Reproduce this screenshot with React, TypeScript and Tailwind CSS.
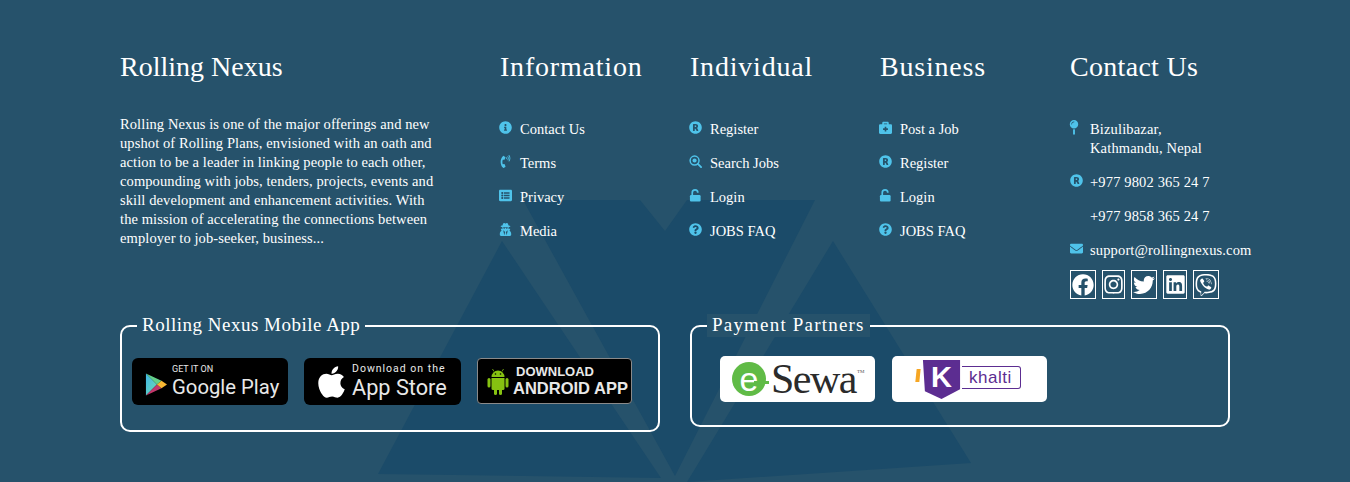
import React from 'react';
import {
  FaInfoCircle, FaPhoneVolume, FaListAlt, FaUserSecret, FaRegistered,
  FaQuestionCircle, FaBriefcaseMedical, FaMapPin, FaEnvelope, FaFacebook, FaInstagram,
  FaTwitter, FaLinkedin, FaViber, FaApple,
} from 'react-icons/fa';

const SearchR = ({ className }: { className?: string }) => (
  <svg viewBox="0 0 14 14" className={className}>
    <circle cx="6" cy="6" r="4.8" fill="none" stroke="currentColor" strokeWidth="1.6" />
    <circle cx="6" cy="6" r="2.2" fill="currentColor" />
    <path d="M9.5 9.5 L13 13" stroke="currentColor" strokeWidth="2" strokeLinecap="round" />
  </svg>
);

const Unlock = ({ className }: { className?: string }) => (
  <svg viewBox="0 0 14 14" className={className}>
    <path d="M3.5 7 V4 A3 3 0 0 1 9.5 4" fill="none" stroke="currentColor" strokeWidth="1.8" />
    <rect x="1" y="6.5" width="11.5" height="7" rx="1.2" fill="currentColor" />
  </svg>
);

const AndroidBot = () => (
  <svg viewBox="0 0 22 27" className="mr-[4px] h-[27px] w-[22px] shrink-0" fill="#86c211">
    <path d="M4.5 9 A6.5 6.5 0 0 1 17.5 9 Z" />
    <path d="M7 3.5 L5.5 1 M15 3.5 L16.5 1" stroke="#86c211" strokeWidth="0.8" />
    <circle cx="8.5" cy="6" r="0.8" fill="#000" />
    <circle cx="13.5" cy="6" r="0.8" fill="#000" />
    <path d="M4.5 10 H17.5 V20.5 A1.5 1.5 0 0 1 16 22 H6 A1.5 1.5 0 0 1 4.5 20.5 Z" />
    <rect x="0.5" y="10" width="3" height="9.5" rx="1.5" />
    <rect x="18.5" y="10" width="3" height="9.5" rx="1.5" />
    <rect x="7" y="20" width="3" height="7" rx="1.5" />
    <rect x="12" y="20" width="3" height="7" rx="1.5" />
  </svg>
);

const info = [
  { icon: FaInfoCircle, label: 'Contact Us' },
  { icon: FaPhoneVolume, label: 'Terms' },
  { icon: FaListAlt, label: 'Privacy' },
  { icon: FaUserSecret, label: 'Media' },
];
const individual = [
  { icon: FaRegistered, label: 'Register' },
  { icon: SearchR, label: 'Search Jobs' },
  { icon: Unlock, label: 'Login' },
  { icon: FaQuestionCircle, label: 'JOBS FAQ' },
];
const business = [
  { icon: FaBriefcaseMedical, label: 'Post a Job' },
  { icon: FaRegistered, label: 'Register' },
  { icon: Unlock, label: 'Login' },
  { icon: FaQuestionCircle, label: 'JOBS FAQ' },
];

const LinkColumn = ({ title, items }: { title: string; items: typeof info }) => (
  <div className="w-[190px] shrink-0">
    <h4 className="text-[28px] leading-[34px] text-white tracking-[0.8px]">{title}</h4>
    <ul className="mt-[35px] flex flex-col gap-[14px]">
      {items.map((item) => (
        <li key={item.label} className="flex h-[20px] items-center text-[14.5px] leading-[20px] text-white">
          <item.icon className="mb-[3px] mr-[7px] h-[13px] w-[13px] -translate-x-px text-[#4fc3ea]" />
          <span>{item.label}</span>
        </li>
      ))}
    </ul>
  </div>
);

const Box = ({ title, className, legendClass, children }: { title: string; className: string; legendClass: string; children: React.ReactNode }) => (
  <fieldset className={`rounded-[10px] border-2 border-white ${className}`}>
    <legend className={`ml-[15px] bg-[#26526b] px-[5px] pb-[2px] text-[19px] leading-[21px] text-white ${legendClass}`}>{title}</legend>
    {children}
  </fieldset>
);

export default function App() {
  return (
    <footer className="relative h-[482px] w-full overflow-hidden bg-[#26526b] font-['Liberation_Serif',serif]">
      <svg className="absolute inset-0 h-full w-full" viewBox="0 0 1350 482" preserveAspectRatio="none">
        <g fill="#1b4b69">
          <polygon points="502,241 378,474 661,478" />
          <polygon points="523,200 640,200 665,231 687,200 815,200 675,476" />
          <polygon points="833,241 971,463 687,482" />
        </g>
      </svg>

      <div className="relative mx-auto w-[1110px] pt-[50px]">
        <div className="flex">
          <div className="w-[380px] shrink-0">
            <h4 className="text-[28px] leading-[34px] text-white">Rolling Nexus</h4>
            <p className="mt-[31px] w-[320px] text-[14.5px] leading-[19px] tracking-[0.1px] text-white">
              Rolling Nexus is one of the major offerings and new upshot of Rolling Plans, envisioned with an oath and
              action to be a leader in linking people to each other, compounding with jobs, tenders, projects, events and
              skill development and enhancement activities. With the mission of accelerating the connections between
              employer to job-seeker, business...
            </p>
          </div>
          <LinkColumn title="Information" items={info} />
          <LinkColumn title="Individual" items={individual} />
          <LinkColumn title="Business" items={business} />
          <div className="w-[190px] shrink-0">
            <h4 className="text-[28px] leading-[34px] text-white tracking-[0.3px]">Contact Us</h4>
            <div className="mt-[36px] flex flex-col text-[14.5px] leading-[19px] tracking-[0.15px] text-white">
              <div className="flex">
                <FaMapPin className="mr-[6px] h-[15px] w-[14px] -translate-x-[3px] text-[#4fc3ea]" />
                <span>Bizulibazar,<br />Kathmandu, Nepal</span>
              </div>
              <div className="mt-[15px] flex">
                <FaRegistered className="mr-[7px] mt-[1px] h-[13px] w-[13px] text-[#4fc3ea]" />
                <span>+977 9802 365 24 7</span>
              </div>
              <div className="mt-[15px] pl-[20px]">+977 9858 365 24 7</div>
              <div className="mt-[15px] flex">
                <FaEnvelope className="mr-[7px] mt-[1px] h-[13px] w-[13px] text-[#4fc3ea]" />
                <span>support@rollingnexus.com</span>
              </div>
            </div>
            <div className="mt-[10px] flex gap-[6px]">
              <span className="flex h-[29px] w-[26px] items-center justify-center border border-white"><FaFacebook className="h-[22px] w-[22px] text-white" /></span>
              <span className="flex h-[29px] w-[23px] items-center justify-center border border-white"><FaInstagram className="h-[21px] w-[21px] text-white" /></span>
              <span className="flex h-[29px] w-[26px] items-center justify-center border border-white"><FaTwitter className="h-[22px] w-[22px] text-white" /></span>
              <span className="flex h-[29px] w-[24px] items-center justify-center border border-white"><FaLinkedin className="h-[21px] w-[21px] text-white" /></span>
              <span className="flex h-[29px] w-[26px] items-center justify-center border border-white"><FaViber className="h-[22px] w-[22px] text-white" /></span>
            </div>
          </div>
        </div>

        <div className="mt-[15px] flex gap-[30px]">
          <Box title="Rolling Nexus Mobile App" legendClass="tracking-[0.5px]" className="h-[118px] w-[540px]">
            <div className="ml-[10px] mt-[21px] flex gap-[16px]">
              <div className="flex h-[47px] w-[156px] items-center rounded-[6px] bg-black pl-[13px] font-['Roboto',sans-serif] text-[#e8e8e8]">
                <svg viewBox="0 0 24 26" className="mr-[5px] mt-[6px] h-[25px] w-[22px]">
                  <defs>
                    <linearGradient id="gp" x1="0" y1="0" x2="1" y2="1">
                      <stop offset="0" stopColor="#3fb6e8" />
                      <stop offset="1" stopColor="#6fdcb0" />
                    </linearGradient>
                  </defs>
                  <polygon points="1,1 13,13 1,25" fill="url(#gp)" />
                  <polygon points="1,1 18,9 13,13" fill="#63d08a" />
                  <polygon points="1,25 18,17 13,13" fill="#c2386b" />
                  <polygon points="18,9 24,13 18,17 13,13" fill="#f7b733" />
                </svg>
                <div className="flex flex-col">
                  <span className="text-[9px] leading-[11px]">GET IT ON</span>
                  <span className="text-[20.3px] leading-[24px]">Google Play</span>
                </div>
              </div>
              <div className="flex h-[47px] w-[157px] items-center rounded-[6px] bg-black pl-[14px] font-['Roboto',sans-serif] text-[#e8e8e8]">
                <FaApple className="mr-[7px] h-[36px] w-[27px] text-white" />
                <div className="flex flex-col">
                  <span className="text-[10.5px] leading-[12px] tracking-[1px]">Download on the</span>
                  <span className="text-[21.7px] leading-[26px]">App Store</span>
                </div>
              </div>
              <div className="flex h-[46px] w-[155px] items-center rounded-[4px] border border-[#8a8a8a] bg-black pl-[9px] font-['Liberation_Sans',sans-serif] font-bold text-[#e8e8e8]">
                <AndroidBot />
                <div className="flex flex-col">
                  <span className="pl-[3px] text-[13px] leading-[15px]">DOWNLOAD</span>
                  <span className="text-[16.5px] leading-[19px] whitespace-nowrap">ANDROID APP</span>
                </div>
              </div>
            </div>
          </Box>
          <Box title="Payment Partners" legendClass="tracking-[1.2px]" className="h-[113px] w-[540px]">
            <div className="ml-[28px] mt-[19px] flex gap-[17px]">
              <div className="flex h-[46px] w-[155px] items-center rounded-[5px] bg-white pl-[12px]">
                <span className="relative flex h-[34px] w-[34px] items-center justify-center rounded-full bg-[#60bb46] font-['Liberation_Sans',sans-serif] text-[34px] leading-[30px] text-white">
                  e
                  <span className="absolute left-[22px] top-[19px] h-[3px] w-[15px] bg-[#60bb46]" />
                </span>
                <span className="ml-[5px] text-[42px] leading-[44px] text-[#2b2b2b] tracking-[-1.5px]">Sewa</span>
                <span className="mb-[14px] ml-[1px] text-[5px] leading-[6px] text-[#555]">TM</span>
              </div>
              <div className="flex h-[46px] w-[155px] items-center rounded-[5px] bg-white pl-[24px]">
                <span className="mb-[8px] mr-[1px] h-[13px] w-[4px] -skew-x-6 bg-[#f6a623]" />
                <div className="relative h-[41px] w-[41px]">
                  <svg viewBox="0 0 40 42" className="h-[41px] w-[41px]">
                    <path d="M1 1 H39 V31 L20 41 L3 33 Z" fill="#5c2d91" />
                  </svg>
                  <span className="absolute inset-x-0 top-[3px] text-center font-['Liberation_Sans',sans-serif] text-[29px] font-bold leading-[30px] text-white">K</span>
                </div>
                <span className="mb-[3px] rounded-r-[3px] border border-l-0 border-[#5c2d91] pl-[7px] pr-[8px] font-['Liberation_Sans',sans-serif] text-[17px] leading-[21px] tracking-[0.5px] text-[#5c2d91]">khalti</span>
              </div>
            </div>
          </Box>
        </div>
      </div>
    </footer>
  );
}
